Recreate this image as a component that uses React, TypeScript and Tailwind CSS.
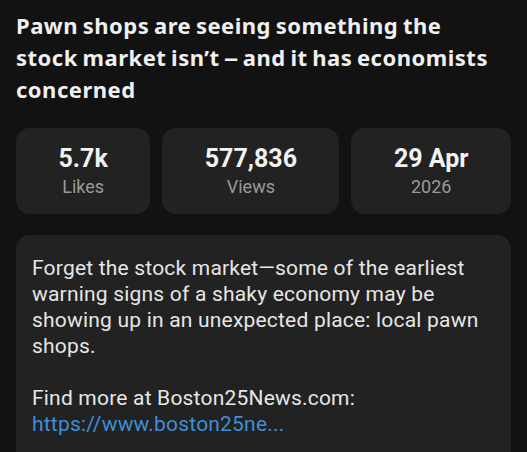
import React from "react";

type Stat = { value: string; label: string };

const stats: Stat[] = [
  { value: "5.7k", label: "Likes" },
  { value: "577,836", label: "Views" },
  { value: "29 Apr", label: "2026" },
];

function StatCard({ value, label }: Stat) {
  return (
    <div className="flex-auto rounded-[14px] bg-[#222222] py-[15px] flex flex-col items-center">
      <div className="text-[25px] leading-8 font-bold text-[#f2f2f2]">{value}</div>
      <div className="text-[18px] leading-6 text-[#9a9a9a]">{label}</div>
    </div>
  );
}

export default function App() {
  return (
    <div
      className="h-[452px] w-full bg-[#121212] px-4 pt-[9px] overflow-hidden flex flex-col"
      style={{ fontFamily: "Roboto, 'Noto Sans', sans-serif" }}
    >
      <h1
        className="mr-[11px] text-[22px] leading-8 font-bold tracking-[0.5px] [word-spacing:-1.5px] text-[#f0f0f0]"
        style={{ fontFamily: "'Noto Sans', 'Open Sans', sans-serif" }}
      >
        Pawn shops are seeing something the stock market isn’t{" "}
        <span className="inline-block scale-x-[0.6] mx-[-4.4px]">—</span> and it has economists concerned
      </h1>

      <div className="mt-[23px] flex gap-3">
        {stats.map((s) => (
          <StatCard key={s.label} {...s} />
        ))}
      </div>

      <div className="mt-[21px] flex-1 rounded-t-[14px] bg-[#222222] px-4 pt-5">
        <p className="text-[21px] leading-[26px] tracking-[0.2px] text-[#e6e6e6] whitespace-pre-line">
          {"Forget the stock market—some of the earliest warning signs of a shaky economy may be showing up in an unexpected place: local pawn shops.\n\nFind more at Boston25News.com:\n"}
          <a className="text-[#3d8fd8]">https://www.boston25ne...</a>
        </p>
      </div>
    </div>
  );
}
